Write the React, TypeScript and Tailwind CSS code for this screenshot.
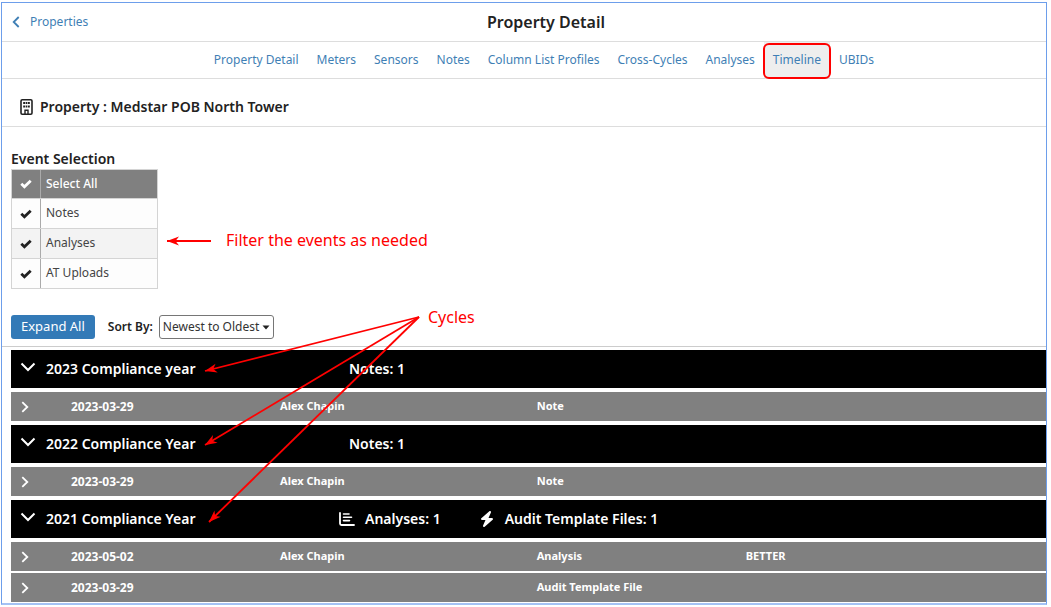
import React, { useState } from "react";
import { FaBolt } from "react-icons/fa6";

const tabs = [
  "Property Detail",
  "Meters",
  "Sensors",
  "Notes",
  "Column List Profiles",
  "Cross-Cycles",
  "Analyses",
  "Timeline",
  "UBIDs",
];

type Count = { icon?: "chart" | "bolt"; text: string };
type Event = { date: string; author: string; kind: string; detail: string };
type Cycle = { name: string; counts: Count[]; events: Event[] };

const cycles: Cycle[] = [
  {
    name: "2023 Compliance year",
    counts: [{ text: "Notes: 1" }],
    events: [{ date: "2023-03-29", author: "Alex Chapin", kind: "Note", detail: "" }],
  },
  {
    name: "2022 Compliance Year",
    counts: [{ text: "Notes: 1" }],
    events: [{ date: "2023-03-29", author: "Alex Chapin", kind: "Note", detail: "" }],
  },
  {
    name: "2021 Compliance Year",
    counts: [
      { icon: "chart", text: "Analyses: 1" },
      { icon: "bolt", text: "Audit Template Files: 1" },
    ],
    events: [
      { date: "2023-05-02", author: "Alex Chapin", kind: "Analysis", detail: "BETTER" },
      { date: "2023-03-29", author: "", kind: "Audit Template File", detail: "" },
    ],
  },
];

function Building() {
  return (
    <svg viewBox="0 0 13 16" className="h-4 w-[13px]" fill="none" stroke="#222" aria-hidden="true">
      <rect x="1" y="0.8" width="11" height="14.400" rx="1.200" strokeWidth="1.600" />
      <path d="M3.200 4h1.800M5.600 4h1.800M8 4h1.800M3.200 7.500h1.800M5.600 7.500h1.800M8 7.500h1.800" strokeWidth="1.900" />
      <path d="M5 15v-3.800h3V15" strokeWidth="1.400" />
    </svg>
  );
}

function Chart() {
  return (
    <svg viewBox="0 0 16 14" className="h-[14px] w-4" fill="none" stroke="#fff" strokeLinecap="round" aria-hidden="true">
      <path d="M1 1v10.500a1.500 1.500 0 0 0 1.500 1.500H15" strokeWidth="1.800" />
      <path d="M4.500 2h5.500M4.500 5.300h8M4.500 8.600h6" strokeWidth="1.600" />
    </svg>
  );
}

function Check({ color }: { color: string }) {
  return (
    <svg viewBox="0 0 12 10" className="pointer-events-none h-[10px] w-3" fill="none" stroke={color} strokeWidth="2.800" aria-hidden="true">
      <path d="M1.300 4.800 4.400 7.700 10.700 1.700" />
    </svg>
  );
}

function EventFilter() {
  const names = ["Notes", "Analyses", "AT Uploads"];
  const [on, setOn] = useState([true, true, true]);
  const all = on.every(Boolean);
  const rows = [{ name: "Select All", checked: all, toggle: () => setOn(on.map(() => !all)) }].concat(
    names.map((name, i) => ({
      name,
      checked: on[i],
      toggle: () => setOn(on.map((v, j) => (j === i ? !v : v))),
    })),
  );
  return (
    <div className="w-[147px] border border-[#d4d4d4] text-xs">
      {rows.map((r, i) => (
        <label
          key={r.name}
          className={
            i === 0
              ? "flex h-7 items-stretch bg-[#808080] font-medium text-white"
              : i === 2
                ? "flex h-[30px] items-stretch border-t border-[#d4d4d4] bg-[#f3f3f3] text-[#444]"
                : "flex h-[30px] items-stretch border-t border-[#d4d4d4] bg-[#fdfdfd] text-[#444]"
          }
        >
          <span className="relative grid w-[29px] place-items-center border-r border-[#aaa]">
            <input
              type="checkbox"
              checked={r.checked}
              onChange={r.toggle}
              className="absolute inset-0 appearance-none"
            />
            {r.checked && <Check color={i === 0 ? "#fff" : "#222"} />}
          </span>
          <span className="flex items-center pb-px pl-[5px]">{r.name}</span>
        </label>
      ))}
    </div>
  );
}

function CycleBlock({ cycle }: { cycle: Cycle }) {
  return (
    <section className="flex flex-col gap-1">
      <div className="flex h-[38px] items-center bg-black text-sm font-semibold text-white">
        <button type="button" aria-label="Collapse cycle" className="w-[35px] pb-1 pl-[9px]">
          <svg viewBox="0 0 16 10" className="h-[10px] w-4" fill="none" stroke="#fff" strokeWidth="2">
            <path d="M1.500 1.500 8 8l6.500-6.500" />
          </svg>
        </button>
        <h3 className="w-[293px]">{cycle.name}</h3>
        <div className="flex items-center gap-[38px]">
          {cycle.counts.map((c) => (
            <span key={c.text} className="flex items-center gap-[10px]">
              {c.icon === "chart" && <Chart />}
              {c.icon === "bolt" && <FaBolt className="size-4" />}
              <span className={c.icon ? "" : "pl-[10px]"}>{c.text}</span>
            </span>
          ))}
        </div>
      </div>
      <table className="w-full table-fixed border-separate border-spacing-0 text-left text-[11px] font-bold text-white">
        <colgroup>
          <col className="w-[60px]" />
          <col className="w-[20.2%]" />
          <col className="w-[24.8%]" />
          <col className="w-[20.2%]" />
          <col />
        </colgroup>
        <tbody>
          {cycle.events.map((e) => (
            <tr
              key={e.date + e.kind}
              className="h-[29px] bg-[#808080] not-last:h-[31px] [&:not(:last-child)>td]:border-b-2 [&>td]:border-white [&>td]:p-0"
            >
              <td>
                <button type="button" aria-label="Expand event" className="ml-[10px] block">
                  <svg viewBox="0 0 8 12" className="h-3 w-2" fill="none" stroke="#fff" strokeWidth="1.800">
                    <path d="M1.300 1.200 6.300 6l-5 4.800" />
                  </svg>
                </button>
              </td>
              <td className="text-xs">{e.date}</td>
              <td>{e.author}</td>
              <td>{e.kind}</td>
              <td>{e.detail}</td>
            </tr>
          ))}
        </tbody>
      </table>
    </section>
  );
}

function Arrow({ x, y, fromX, fromY }: { x: number; y: number; fromX: number; fromY: number }) {
  const angle = (Math.atan2(y - fromY, x - fromX) * 180) / Math.PI;
  return (
    <g stroke="none" fill="#f00">
      <line x1={fromX} y1={fromY} x2={x} y2={y} stroke="#f00" strokeWidth="1.800" />
      <path d="M0 0-12-4.500-8.500 0-12 4.500z" transform={`translate(${x} ${y}) rotate(${angle})`} />
    </g>
  );
}

export default function App() {
  return (
    <div className="bg-white pt-[2px] pr-1 pb-[2px] pl-px font-['Noto_Sans',sans-serif] text-[#222]">
      <div className="relative border border-b-2 border-[#6d9eeb] border-b-[#a4c2f4]">
        <header className="relative flex h-[39px] items-center justify-center border-b border-[#ddd] pl-[44px]">
          <a href="#properties" className="absolute left-[10px] flex items-center gap-[10px] text-xs text-[#3f7fb5]">
            <svg viewBox="0 0 8 12" className="h-3 w-2" fill="none" stroke="#3f7fb5" strokeWidth="1.800">
              <path d="M6.700 1 1.700 6l5 5" />
            </svg>
            Properties
          </a>
          <h1 className="text-base font-semibold">Property Detail</h1>
        </header>
        <nav className="flex h-[37px] justify-center border-b border-[#ddd] pl-10 text-xs text-[#3f7fb5]">
          {tabs.map((t) =>
            t === "Timeline" ? (
              <a
                key={t}
                href="#timeline"
                className="relative flex items-center bg-[#eee] px-[9px] pb-px after:absolute after:-inset-px after:top-px after:rounded-md after:border-2 after:border-[#f00]"
              >
                {t}
              </a>
            ) : (
              <a key={t} href="#tab" className="flex items-center px-[9px] pb-px">
                {t}
              </a>
            ),
          )}
        </nav>
        <div className="flex h-12 items-center gap-[7px] border-b border-[#ddd] pt-2 pl-[18px]">
          <Building />
          <h2 className="text-sm font-semibold">Property : Medstar POB North Tower</h2>
        </div>
        <main>
          <div className="px-[9px] pt-[21px]">
            <h3 className="text-sm font-semibold leading-[21px]">Event Selection</h3>
            <EventFilter />
          </div>
          <div className="flex items-center border-b border-[#ccc] px-[9px] pt-[26px] pb-[7px]">
            <button type="button" className="h-6 rounded-[3px] bg-[#337ab7] px-[10px] text-[13px] text-white">
              Expand All
            </button>
            <label htmlFor="sort" className="ml-[13px] text-xs font-semibold">
              Sort By:
            </label>
            <span className="relative ml-[6px] flex items-center">
              <select
                id="sort"
                className="h-6 w-[115px] appearance-none rounded-[3px] border border-[#767676] bg-white pl-[3px] text-xs text-[#333]"
              >
                <option>Newest to Oldest</option>
                <option>Oldest to Newest</option>
              </select>
              <svg viewBox="0 0 8 5" className="pointer-events-none absolute right-1 h-[5px] w-2" fill="#222">
                <path d="M0.500 0.500h7L4 4.500z" />
              </svg>
            </span>
          </div>
          <div className="flex flex-col gap-1 pt-[3px] pb-px pl-[9px]">
            {cycles.map((c) => (
              <CycleBlock key={c.name} cycle={c} />
            ))}
          </div>
        </main>
        <svg
          width="430"
          height="540"
          viewBox="2 3 430 540"
          className="pointer-events-none absolute top-0 left-0"
          aria-hidden="true"
        >
          <Arrow fromX={211} fromY={241} x={167} y={241} />
          <Arrow fromX={419} fromY={317} x={205} y={371} />
          <Arrow fromX={419} fromY={317} x={205} y={445} />
          <Arrow fromX={419} fromY={317} x={209} y={522} />
        </svg>
        <p className="absolute top-[227px] left-[224px] text-base leading-5 text-[#f00]">
          Filter the events as needed
        </p>
        <p className="absolute top-[304px] left-[426px] text-base leading-5 text-[#f00]">Cycles</p>
      </div>
    </div>
  );
}
